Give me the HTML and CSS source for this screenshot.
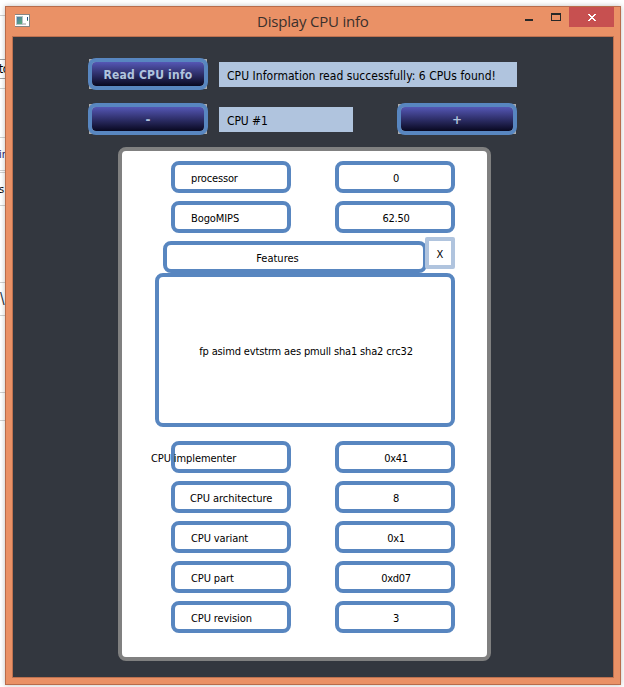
FILE: index.html
```
<!DOCTYPE html>
<html lang="en">
<head>
<meta charset="utf-8">
<title>Display CPU info</title>
<link rel="stylesheet" href="styles.css">
</head>
<body>
<div class="backdrop">
  <div class="strip h9"></div>
  <div class="strip h43"></div>
  <div class="strip h18 field">to</div>
  <div class="strip h9"></div>
  <div class="strip h48"></div>
  <div class="strip h32 navy">in</div>
  <div class="strip h1"></div>
  <div class="strip h32 item">s</div>
  <div class="strip h76"></div>
  <div class="strip h32 path">\</div>
  <div class="strip h76"></div>
  <div class="strip h27"></div>
</div>
<main class="window">
  <header class="titlebar">
    <svg class="app-icon" width="16" height="14" viewBox="0 0 16 14">
      <defs><linearGradient id="pic" x1="0" y1="0" x2="1" y2="1"><stop offset="0" stop-color="#4a78a8"/><stop offset="1" stop-color="#5cb078"/></linearGradient></defs>
      <path fill="#858585" d="M0 0h15v13H0z"/><path fill="#fff" d="M0 1h14v11H0z"/>
      <path fill="#b8c4c8" d="M1 2h7v9H1z"/><path fill="url(#pic)" d="M2 3h5v7H2z"/>
      <path fill="#ccc" d="M8 9h3v2H8z"/><path fill="#285088" d="M12 3h1v3h-1z"/><path fill="#55a070" d="M12 6h1v1h-1z"/>
    </svg>
    <h1 class="title">Display CPU info</h1>
    <svg class="min" width="8" height="2" viewBox="0 0 8 2"><path fill="#282828" d="M0 0h8v2H0z"/></svg>
    <svg class="max" width="10" height="8" viewBox="0 0 10 8"><path fill="#282828" fill-rule="evenodd" d="M0 0h10v8H0zM1 2v5h8V2z"/></svg>
    <div class="close"><svg width="8" height="7" viewBox="0 0 8 7"><path fill="#fff" d="M0 0h2v1h1v1h2V1h1V0h2v1H7v1H6v1H5v1h1v1h1v1h1v1H6V6H5V5H3v1H2v1H0V6h1V5h1V4h1V3H2V2H1V1H0z"/></svg></div>
  </header>
  <section class="client">
    <div class="toolbar">
      <div class="plate"><button class="btn"><span class="read">Read CPU info</span></button></div>
      <div class="status wide"><span class="msg">CPU Information read successfully: 6 CPUs found!</span></div>
    </div>
    <div class="toolbar second">
      <div class="plate"><button class="btn sign">-</button></div>
      <div class="status narrow"><span class="num">CPU #1</span></div>
      <div class="plate next"><button class="btn sign">+</button></div>
    </div>
    <div class="panel">
      <div class="row"><div class="box name proc"><span>processor</span></div><div class="box value">0</div></div>
      <div class="row"><div class="box name"><span>BogoMIPS</span></div><div class="box value">62.50</div></div>
      <div class="features">
        <div class="box heading">Features</div>
        <button class="dismiss">X</button>
        <div class="box list"><span class="flags">fp asimd evtstrm aes pmull sha1 sha2 crc32</span></div>
      </div>
      <div class="row"><div class="box name hang"><span>CPU implementer</span></div><div class="box value">0x41</div></div>
      <div class="row"><div class="box name arch"><span>CPU architecture</span></div><div class="box value">8</div></div>
      <div class="row"><div class="box name"><span>CPU variant</span></div><div class="box value">0x1</div></div>
      <div class="row"><div class="box name"><span>CPU part</span></div><div class="box value">0xd07</div></div>
      <div class="row"><div class="box name"><span>CPU revision</span></div><div class="box value">3</div></div>
    </div>
  </section>
</main>
</body>
</html>
```
FILE: styles.css
```
* { box-sizing: border-box; }
body {
  margin: 0;
  width: 624px;
  height: 687px;
  padding: 6px 0 0 5px;
  overflow: hidden;
  background: #fff;
  font: 11px "DejaVu Sans Condensed", "DejaVu Sans", sans-serif;
  color: #000;
}

/* slice of the application behind the window */
.backdrop { position: absolute; left: 0; top: 6px; width: 5px; }
.strip { box-sizing: content-box; border-bottom: 1px solid #d0d0d0; width: 5px; display: flex; align-items: center; }
.field { border-color: #a0a0a0; font-size: 12px; text-indent: -1px; letter-spacing: -.5px; box-shadow: 0 -1px #a0a0a0; }
.navy { color: #202070; text-indent: -1px; }
.item { text-indent: -1px; }
.path { font-size: 15px; color: #203040; }
.h1 { height: 1px; }
.h9 { height: 9px; }
.h18 { height: 18px; }
.h27 { height: 27px; }
.h32 { height: 32px; }
.h43 { height: 43px; }
.h48 { height: 48px; }
.h76 { height: 76px; }

.window {
  position: relative;
  width: 616px;
  height: 679px;
  background: #ea9166;
  border: 1px solid #b86c4b;
  box-shadow: 0 0 5px rgba(0, 0, 0, .25);
}
.titlebar { height: 29px; display: flex; align-items: flex-start; }
.app-icon { margin: 7px 0 0 9px; flex: none; }
.title {
  margin: 4px 0 0 226px;
  width: 111px;
  font: 15px/21px "Open Sans", sans-serif;
  letter-spacing: -.2px;
  color: #3a302c;
  white-space: nowrap;
}
.min { margin: 12px 0 0 157px; flex: none; }
.max { margin: 6px 0 0 18px; flex: none; }
.close {
  margin-left: 8px;
  width: 45px;
  height: 20px;
  background: #c75050;
  display: flex;
  align-items: center;
  justify-content: center;
}

.client {
  margin-left: 6px;
  width: 602px;
  height: 642px;
  border: 1px solid #bd7150;
  background: #33373f;
  padding-top: 21px;
}
.toolbar { display: flex; align-items: flex-start; height: 32px; padding-left: 75px; }
.second { margin-top: 13px; }
.plate { width: 120px; height: 32px; background: linear-gradient(#aaa, #aaa) center / 118px 30px no-repeat; }
.next { margin-left: 44px; }
.btn {
  display: block;
  width: 120px;
  height: 32px;
  padding: 2px 0 0;
  border: 4px solid #5886c0;
  border-radius: 8px;
  background: linear-gradient(#5557b5, #080820) padding-box;
  color: #b0c4de;
  font: bold 12px "DejaVu Sans Condensed", "DejaVu Sans", sans-serif;
}
.sign { font-family: "DejaVu Sans", sans-serif; }
.status {
  margin: 4px 0 0 11px;
  height: 25px;
  padding-left: 8px;
  background: #b0c4de;
  font-size: 12px;
  line-height: 28px;
  white-space: nowrap;
}
.wide { width: 298px; }
.narrow { width: 134px; }

.panel {
  margin: 12px 0 0 105px;
  width: 373px;
  height: 514px;
  border: 4px solid #808080;
  border-radius: 8px;
  background: #fff;
  padding: 10px 32px 0 33px;
}
.row { display: flex; justify-content: space-between; padding-left: 16px; margin-bottom: 8px; }
.box {
  border: 4px solid #5886c0;
  border-radius: 8px;
  background: #fff;
  display: flex;
  align-items: center;
  justify-content: center;
  white-space: nowrap;
  padding-top: 2px;
}
.name { width: 120px; height: 32px; justify-content: flex-start; padding-left: 16px; letter-spacing: -.1px; }
.proc { letter-spacing: -.15px; }
.arch { padding-left: 15px; letter-spacing: -.05px; }
.hang { padding-left: 0; }
.hang span { margin-left: -24px; }
.value { width: 120px; height: 32px; padding-left: 2px; letter-spacing: -.3px; }
.features { position: relative; margin-bottom: 14px; }
.heading { width: 264px; height: 32px; margin-left: 8px; padding-right: 35px; }
.dismiss {
  position: absolute;
  right: 0;
  top: -4px;
  width: 30px;
  height: 32px;
  padding: 2px 0 0;
  border: 4px solid #b0c4de;
  border-radius: 2px;
  background: #fff;
  color: #000;
  font: 11px "DejaVu Sans Condensed", "DejaVu Sans", sans-serif;
}
.list { width: 300px; height: 154px; padding-left: 2px; }
.read { letter-spacing: .2px; }
.msg { letter-spacing: .04px; }
.num { letter-spacing: -.1px; }
.flags { letter-spacing: -.15px; }
```
